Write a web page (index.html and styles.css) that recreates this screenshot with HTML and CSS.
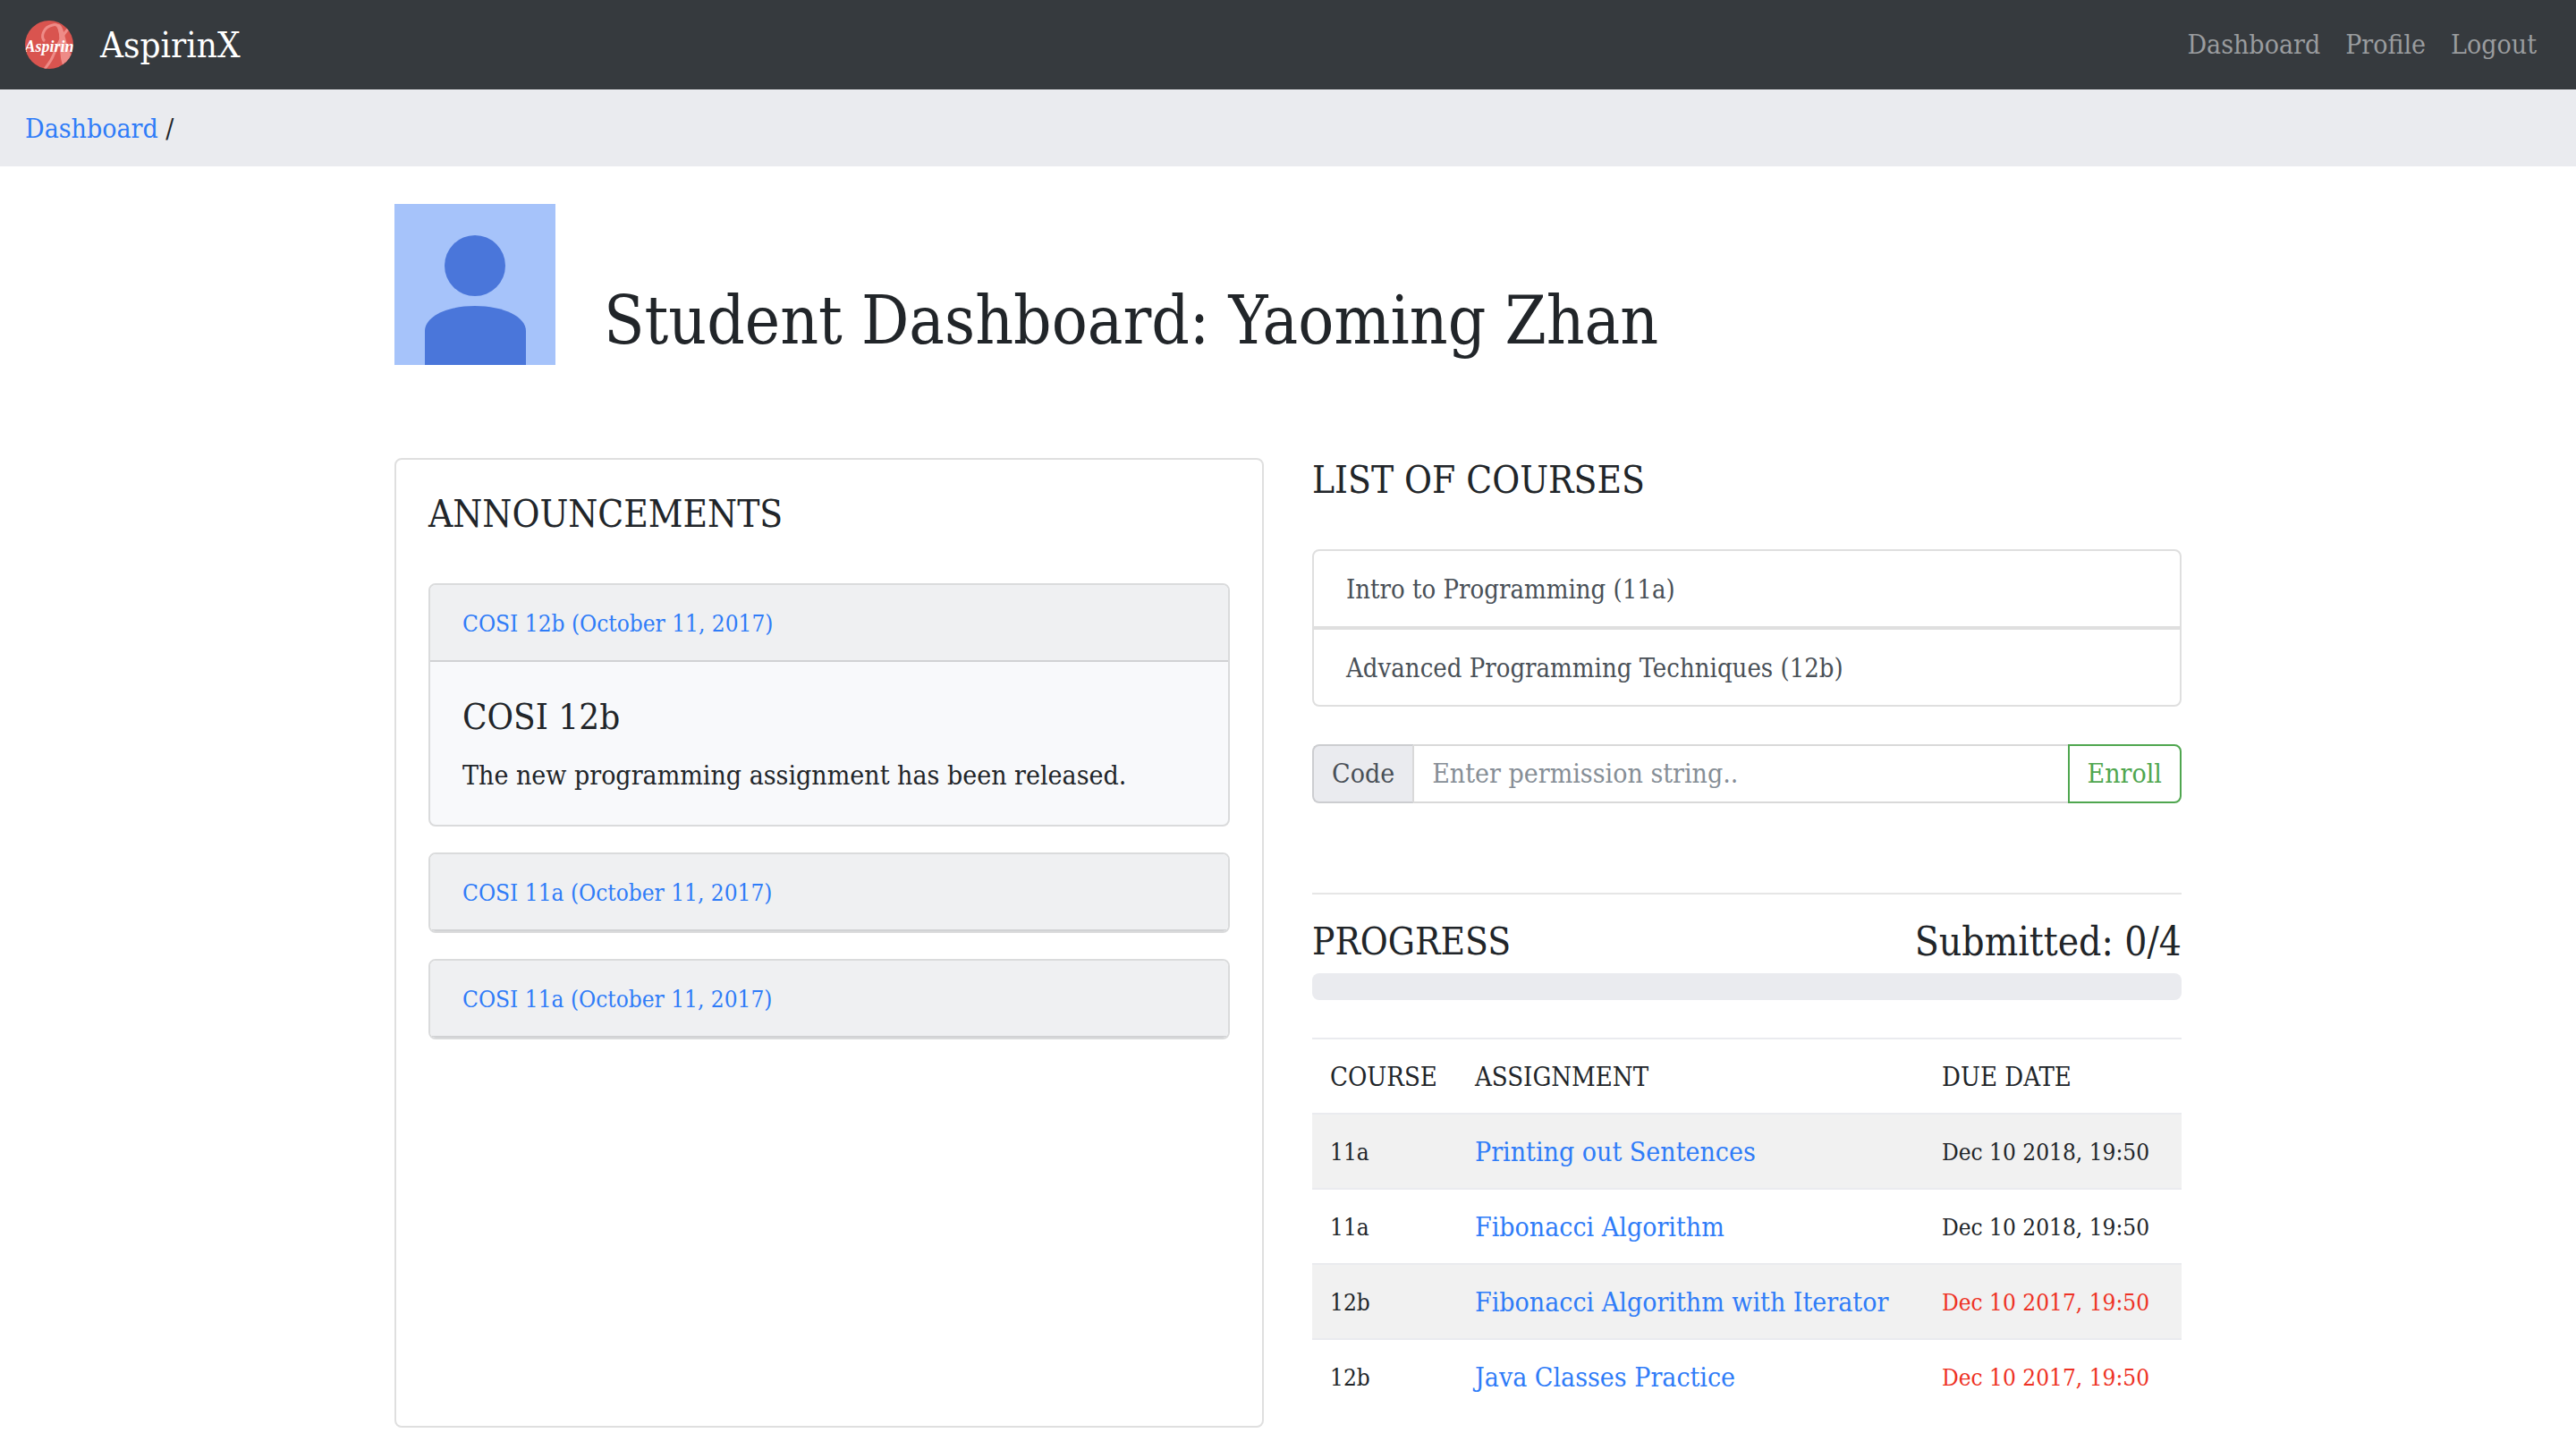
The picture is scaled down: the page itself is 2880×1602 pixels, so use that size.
FILE: index.html
```html
<!DOCTYPE html>
<html lang="en">
<head>
<meta charset="utf-8">
<meta name="viewport" content="width=device-width, initial-scale=1">
<title>AspirinX</title>
<link rel="stylesheet" href="styles.css">
</head>
<body>
<header class="navbar">
  <a class="brand" href="#">
    <svg class="logo" viewBox="0 0 54 54" aria-hidden="true">
      <defs><clipPath id="disc"><circle cx="27" cy="27" r="27"/></clipPath></defs>
      <g clip-path="url(#disc)">
        <rect width="54" height="54" fill="#d9544f"/>
        <path d="M22 23C17 19 20 7 31 5C37 3 39 8 40 20C41 32 40 44 44 50" fill="none" stroke="#ee8b87" stroke-width="3"/>
        <path d="M31 5C38 4 38 14 39 24C40 36 41 46 48 50L54 40C46 36 45 6 38 4Z" fill="#ee8b87"/>
        <path d="M50 8C42 14 36 28 32 38C29 46 25 50 22 54" fill="none" stroke="#ee8b87" stroke-width="3"/>
        <text class="logo-text" x="27" y="35" text-anchor="middle">Aspirin</text>
      </g>
    </svg>
    <span>AspirinX</span>
  </a>
  <nav class="nav-links">
    <a href="#">Dashboard</a>
    <a href="#">Profile</a>
    <a href="#">Logout</a>
  </nav>
</header>
<nav class="breadcrumb" aria-label="Breadcrumb"><a href="#">Dashboard</a> /</nav>

<main class="container">
  <div class="page-head">
    <svg class="avatar" viewBox="0 0 180 180" role="img" aria-label="Profile picture">
      <rect width="180" height="180" fill="#a6c3fa"/>
      <circle cx="90" cy="69" r="34" fill="#4a76da"/>
      <path d="M34 180V142C34 126 58 114 90 114S147 126 147 142V180Z" fill="#4a76da"/>
    </svg>
    <h1>Student Dashboard: Yaoming Zhan</h1>
  </div>

  <div class="columns">
    <section class="panel">
      <h2>ANNOUNCEMENTS</h2>
      <div class="accordion">
        <article class="card">
          <div class="card-header"><a href="#">COSI 12b (October 11, 2017)</a></div>
          <div class="card-body">
            <h3>COSI 12b</h3>
            <p>The new programming assignment has been released.</p>
          </div>
        </article>
        <article class="card">
          <div class="card-header"><a href="#">COSI 11a (October 11, 2017)</a></div>
        </article>
        <article class="card">
          <div class="card-header"><a href="#">COSI 11a (October 11, 2017)</a></div>
        </article>
      </div>
    </section>

    <section class="courses">
      <h2>LIST OF COURSES</h2>
      <div class="course-list">
        <a href="#">Intro to Programming (11a)</a>
        <a href="#">Advanced Programming Techniques (12b)</a>
      </div>
      <form class="enroll">
        <label for="code">Code</label>
        <input id="code" type="text" placeholder="Enter permission string..">
        <button type="button">Enroll</button>
      </form>
      <hr>
      <div class="progress-head">
        <h2>PROGRESS</h2>
        <h2 class="submitted">Submitted: 0/4</h2>
      </div>
      <div class="progress" role="progressbar" aria-label="Submitted" aria-valuemin="0" aria-valuemax="4" aria-valuenow="0"></div>
      <table>
        <thead>
          <tr><th class="col-course">COURSE</th><th>ASSIGNMENT</th><th class="col-due">DUE DATE</th></tr>
        </thead>
        <tbody>
          <tr><td>11a</td><td><a href="#">Printing out Sentences</a></td><td class="due">Dec 10 2018, 19:50</td></tr>
          <tr><td>11a</td><td><a href="#">Fibonacci Algorithm</a></td><td class="due">Dec 10 2018, 19:50</td></tr>
          <tr><td>12b</td><td><a href="#">Fibonacci Algorithm with Iterator</a></td><td class="due overdue">Dec 10 2017, 19:50</td></tr>
          <tr><td>12b</td><td><a href="#">Java Classes Practice</a></td><td class="due overdue">Dec 10 2017, 19:50</td></tr>
        </tbody>
      </table>
    </section>
  </div>
</main>
</body>
</html>
```
FILE: styles.css
```css
* { box-sizing: border-box; }

body {
  margin: 0;
  background: #fff;
  color: #212529;
  font-family: "Roboto Slab", "DejaVu Serif Condensed", "DejaVu Serif", serif;
  font-size: 30px;
  line-height: 42px;
}

h1, h2, h3, p { margin: 0; font-weight: 400; }
h2, h3 { font-size: 42px; line-height: 50px; }
h3 { font-size: 40px; }
a { color: #2f7cf8; text-decoration: none; }

.navbar {
  display: flex;
  align-items: center;
  justify-content: space-between;
  min-height: 100px;
  padding: 0 44px 0 28px;
  background: #363a3e;
}
.brand {
  display: flex;
  align-items: center;
  gap: 30px;
  color: #fff;
  font-size: 40px;
}
.logo { width: 54px; height: 54px; }
.logo-text {
  fill: #fff;
  font: italic 700 18px "Liberation Serif", serif;
}
.nav-links { display: flex; gap: 28px; }
.nav-links a { color: #9a9c9e; }

.breadcrumb { padding: 23px 28px 21px; background: #eaebef; }

.container {
  max-width: 1998px;
  margin: 0 auto;
  padding-top: 42px;
}
.page-head {
  display: flex;
  align-items: flex-end;
  gap: 54px;
  margin-bottom: 104px;
}
.avatar { flex: none; width: 180px; height: 180px; }
h1 { font-size: 74px; line-height: 100px; }

.columns { display: grid; grid-template-columns: 1fr 1fr; gap: 54px; }

.panel {
  padding: 36px 36px 28px;
  border: 2px solid #dfdfdf;
  border-radius: 8px;
}
.accordion {
  display: flex;
  flex-direction: column;
  gap: 29px;
  margin-top: 52px;
}
.card {
  border: 2px solid #dadbdc;
  border-radius: 8px;
  background: #f8f9fb;
  overflow: hidden;
}
.card-header {
  padding: 22px 36px 20px;
  border-bottom: 2px solid #d1d2d4;
  background: #eff0f2;
  font-size: 26px;
}
.card-body { padding: 36px 36px 34px; }
.card-body h3 { margin-bottom: 20px; }

.course-list {
  margin-top: 52px;
  border: 2px solid #dfdfdf;
  border-radius: 8px;
}
.course-list a {
  display: block;
  padding: 22px 36px 20px;
  color: #495057;
  font-size: 29px;
}
.course-list a + a { border-top: 4px solid #dfdfdf; }

.enroll { display: flex; height: 66px; margin-top: 42px; }
.enroll label {
  padding: 10px 20px;
  border: 2px solid #cccdd0;
  border-right-color: #d9d9d9;
  border-radius: 8px 0 0 8px;
  background: #eaebef;
  color: #495057;
}
.enroll input {
  flex: 1;
  min-width: 0;
  padding: 0 20px;
  border: 2px solid #d9d9d9;
  border-width: 2px 0;
  background: #fff;
  color: #495057;
  font: inherit;
}
.enroll input::placeholder { color: #868e96; opacity: 1; }
.enroll button {
  padding: 0 20px;
  border: 2px solid #4fa64f;
  border-radius: 0 8px 8px 0;
  background: #fff;
  color: #4fa64f;
  font: inherit;
}

hr { margin: 100px 0 28px; border: 0; border-top: 2px solid #e6e6e6; }
.progress-head { display: flex; justify-content: space-between; margin-bottom: 10px; }
.submitted { font-size: 44px; }
.progress { height: 30px; border-radius: 8px; background: #eaebef; }

table {
  width: 100%;
  margin: 42px 0 16px;
  border-spacing: 0;
  table-layout: fixed;
}
th, td {
  padding: 21px 20px 19px;
  border-top: 2px solid #eaebef;
  text-align: left;
  white-space: nowrap;
}
th { font-size: 29px; font-weight: 400; }
td:first-child, .due { font-size: 26px; }
.col-course { width: 162px; }
.col-due { width: 288px; }
tbody tr:nth-child(odd) { background: #f1f1f1; }
.overdue { color: #ee3224; }
```
